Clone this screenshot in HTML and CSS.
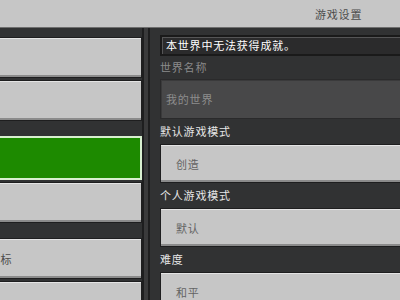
FILE: index.html
```html
<!DOCTYPE html>
<html lang="zh">
<head>
    <meta charset="UTF-8">
    <title>游戏设置</title>
    <link rel="stylesheet" href="styles.css">
</head>
<body>
    <div class="header">
        <span class="title">游戏设置</span>
    </div>

    <div class="main">
        <!-- Left menu -->
        <div class="sidebar">
            <div class="side-group">
                <div class="side-btn"></div>
                <div class="side-btn"></div>
            </div>
            <div class="side-group">
                <div class="side-btn active"></div>
                <div class="side-btn"></div>
            </div>
            <div class="side-group">
                <div class="side-btn"><span class="side-text">显示坐标</span></div>
                <div class="side-btn"></div>
            </div>
        </div>

        <div class="divider"></div>

        <!-- Settings -->
        <div class="content">
            <div class="notice">本世界中无法获得成就。</div>

            <div class="label muted">世界名称</div>
            <div class="field">我的世界</div>

            <div class="label">默认游戏模式</div>
            <div class="dropdown">创造</div>

            <div class="label">个人游戏模式</div>
            <div class="dropdown">默认</div>

            <div class="label">难度</div>
            <div class="dropdown">和平</div>
        </div>
    </div>
</body>
</html>
```

FILE: styles.css
```css
html, body {
    height: 100%;
    margin: 0;
    overflow: hidden;
    font-family: "Noto Sans CJK SC", "Noto Sans", sans-serif;
    font-size: 11px;
    letter-spacing: 0.8px;
    background-color: #313233;
}

/* Top bar */
.header {
    height: 27px;
    background-color: #c6c6c6;
    border-bottom: 1px solid #6e6e6e;
    display: flex;
    align-items: center;
    padding-left: 315px;
    color: #4c4c4c;
}

.main {
    display: flex;
    height: 272px;
}

/* Left menu */
.sidebar {
    width: 142px;
    padding-top: 9px;
    display: flex;
    flex-direction: column;
    gap: 15px;
}

.side-group {
    display: flex;
    flex-direction: column;
    gap: 2px;
}

.side-btn {
    height: 39px;
    flex-shrink: 0;
    background-color: #c6c6c6;
    border: 1px solid #1e1e1f;
    border-left: none;
    box-shadow: inset 0 -2px #8b8b8b, inset 0 1px #e4e4e4;
    display: flex;
    align-items: center;
    overflow: hidden;
    color: #4c4c4c;
}

.side-btn.active {
    height: 40px;
    background-color: #1d8a00;
    border: 2px solid #d9f0d0;
    border-left: none;
    box-shadow: none;
}

.side-text {
    margin-left: -35px;
    white-space: nowrap;
}

.divider {
    width: 8px;
    background-color: #3a3a3b;
    border-left: 2px solid #1e1e1f;
    border-right: 2px solid #1e1e1f;
    box-sizing: border-box;
}

/* Right settings column */
.content {
    flex: 1;
    padding: 7px 0 0 10px;
    display: flex;
    flex-direction: column;
    overflow: hidden;
}

.notice {
    height: 17px;
    flex-shrink: 0;
    background-color: #2b2b2c;
    border: 2px solid #1a1a1a;
    border-right: none;
    box-shadow: inset 1px 1px #555556;
    color: #ffffff;
    padding-left: 4px;
    line-height: 17px;
}

.label {
    height: 25px;
    flex-shrink: 0;
    line-height: 25px;
    color: #e6e6e6;
}

.label.muted {
    height: 23px;
    line-height: 23px;
    color: #8b8b8b;
}

.field {
    height: 38px;
    flex-shrink: 0;
    background-color: #484849;
    border: 1px solid #2a2a2b;
    border-right: none;
    box-shadow: inset 1px 1px #3a3a3b;
    color: #8d8d8d;
    padding-left: 5px;
    display: flex;
    align-items: center;
}

.dropdown {
    height: 37px;
    flex-shrink: 0;
    background-color: #c6c6c6;
    border: 1px solid #1e1e1f;
    border-right: none;
    box-shadow: inset 0 -2px #8b8b8b, inset 0 1px #e4e4e4;
    color: #636363;
    padding-left: 15px;
    display: flex;
    align-items: center;
}
```
